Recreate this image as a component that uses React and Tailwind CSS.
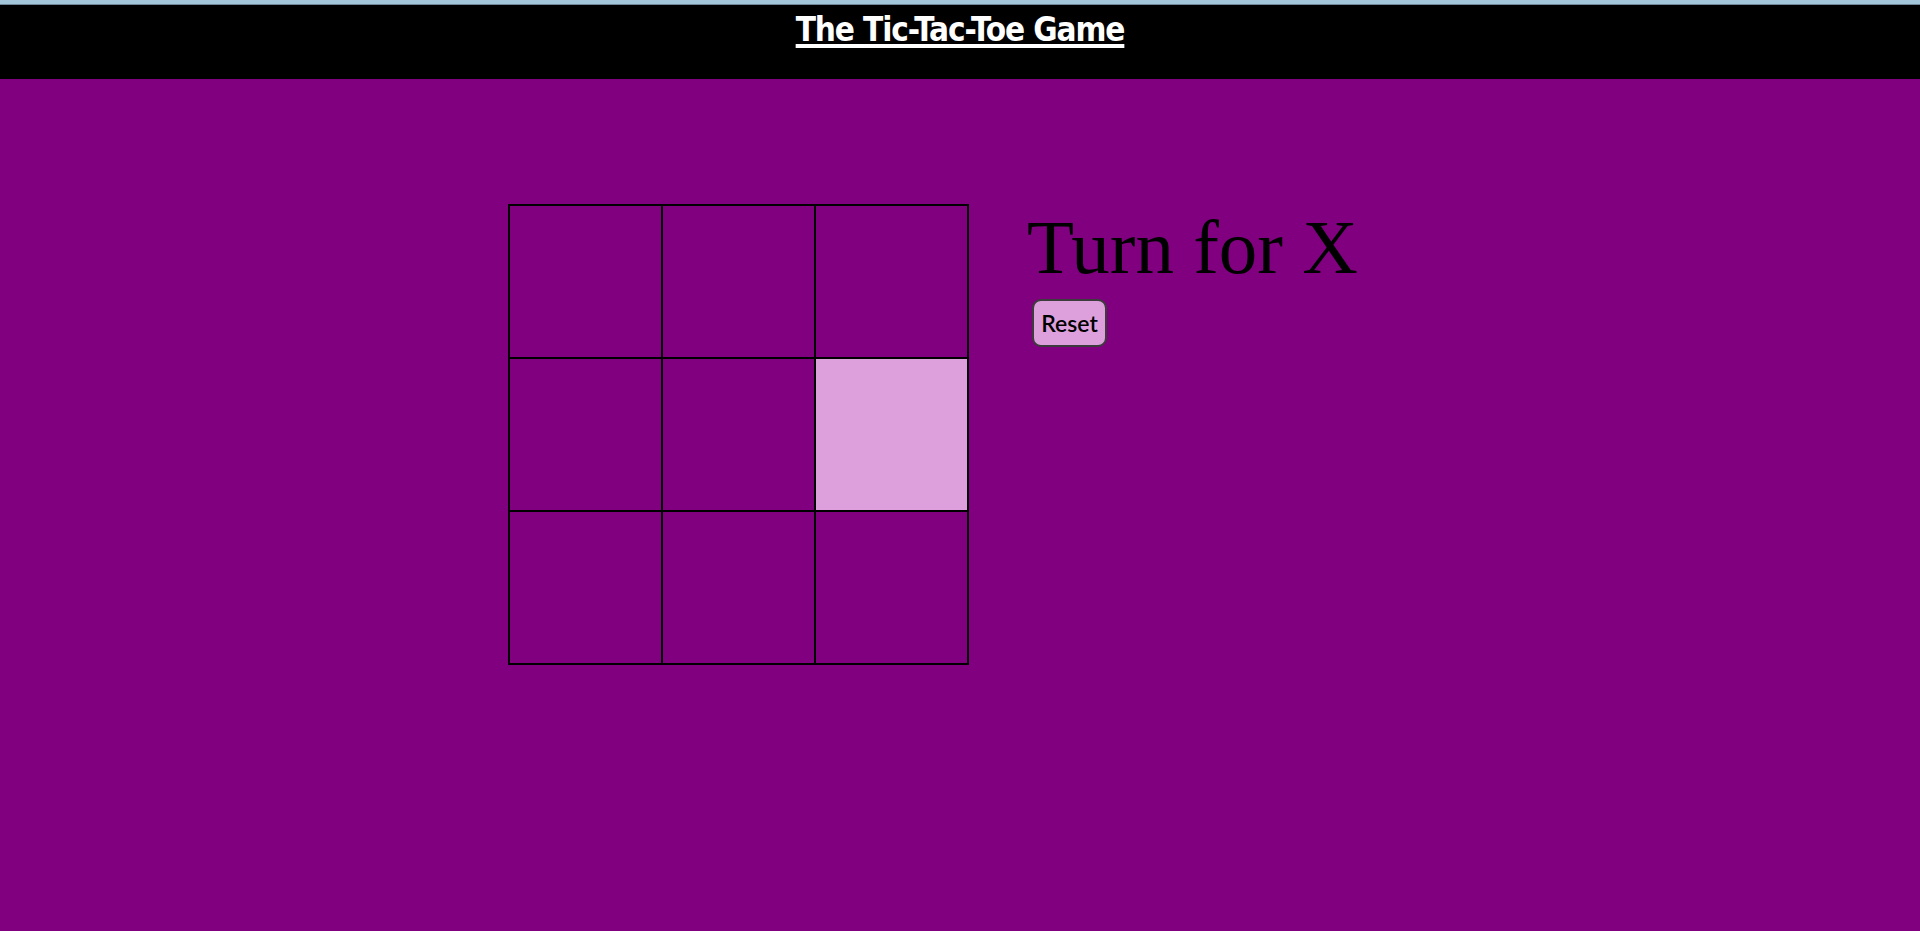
import React, { useState } from 'react';

const Cell = ({ value, active, onClick }) => (
    <button
        onClick={onClick}
        className={`w-[153px] h-[153px] border border-black flex items-center justify-center text-[96px] font-['Liberation_Serif',serif] ${active ? 'bg-[#dda0dd]' : 'bg-[#800080]'}`}
    >
        {value}
    </button>
);

const App = () => {
    const [board, setBoard] = useState(Array(9).fill(null));
    const [xTurn, setXTurn] = useState(true);
    const hovered = 5;

    const play = (i) => {
        if (board[i]) return;
        const next = board.slice();
        next[i] = xTurn ? 'X' : 'O';
        setBoard(next);
        setXTurn(!xTurn);
    };

    return (
        <div className="min-h-[931px] bg-[#800080] flex flex-col">
            {/* Header */}
            <div className="h-[4px] bg-[#a3c6da]" />
            <div className="h-[1px] bg-[#6f8796]" />
            <header className="h-[74px] bg-black flex justify-center">
                <h1 className="mt-[5px] text-white underline underline-offset-[3px] decoration-[4px] text-[33px] leading-[40px] font-bold tracking-[-1.1px] font-['DejaVu_Sans_Condensed','DejaVu_Sans',sans-serif] [font-stretch:condensed]">
                    The Tic-Tac-Toe Game
                </h1>
            </header>

            {/* Game */}
            <main className="flex justify-center gap-[58px] pt-[125px]">
                <div className="grid grid-cols-3 border border-black w-[461px] h-[461px]">
                    {board.map((v, i) => (
                        <Cell key={i} value={v} active={i === hovered} onClick={() => play(i)} />
                    ))}
                </div>
                <div className="w-[385px] flex flex-col items-start">
                    <h2 className="text-[77px] leading-[86px] font-['Liberation_Serif',serif] text-black">
                        Turn for {xTurn ? 'X' : 'O'}
                    </h2>
                    <button
                        onClick={() => { setBoard(Array(9).fill(null)); setXTurn(true); }}
                        className="mt-[9px] ml-[5px] w-[75px] h-[48px] rounded-[9px] border-2 border-[#3c3c3c] bg-[#dda0dd] text-black text-[23px] font-semibold font-['Lato',sans-serif]"
                    >
                        Reset
                    </button>
                </div>
            </main>
        </div>
    );
};

export default App;
